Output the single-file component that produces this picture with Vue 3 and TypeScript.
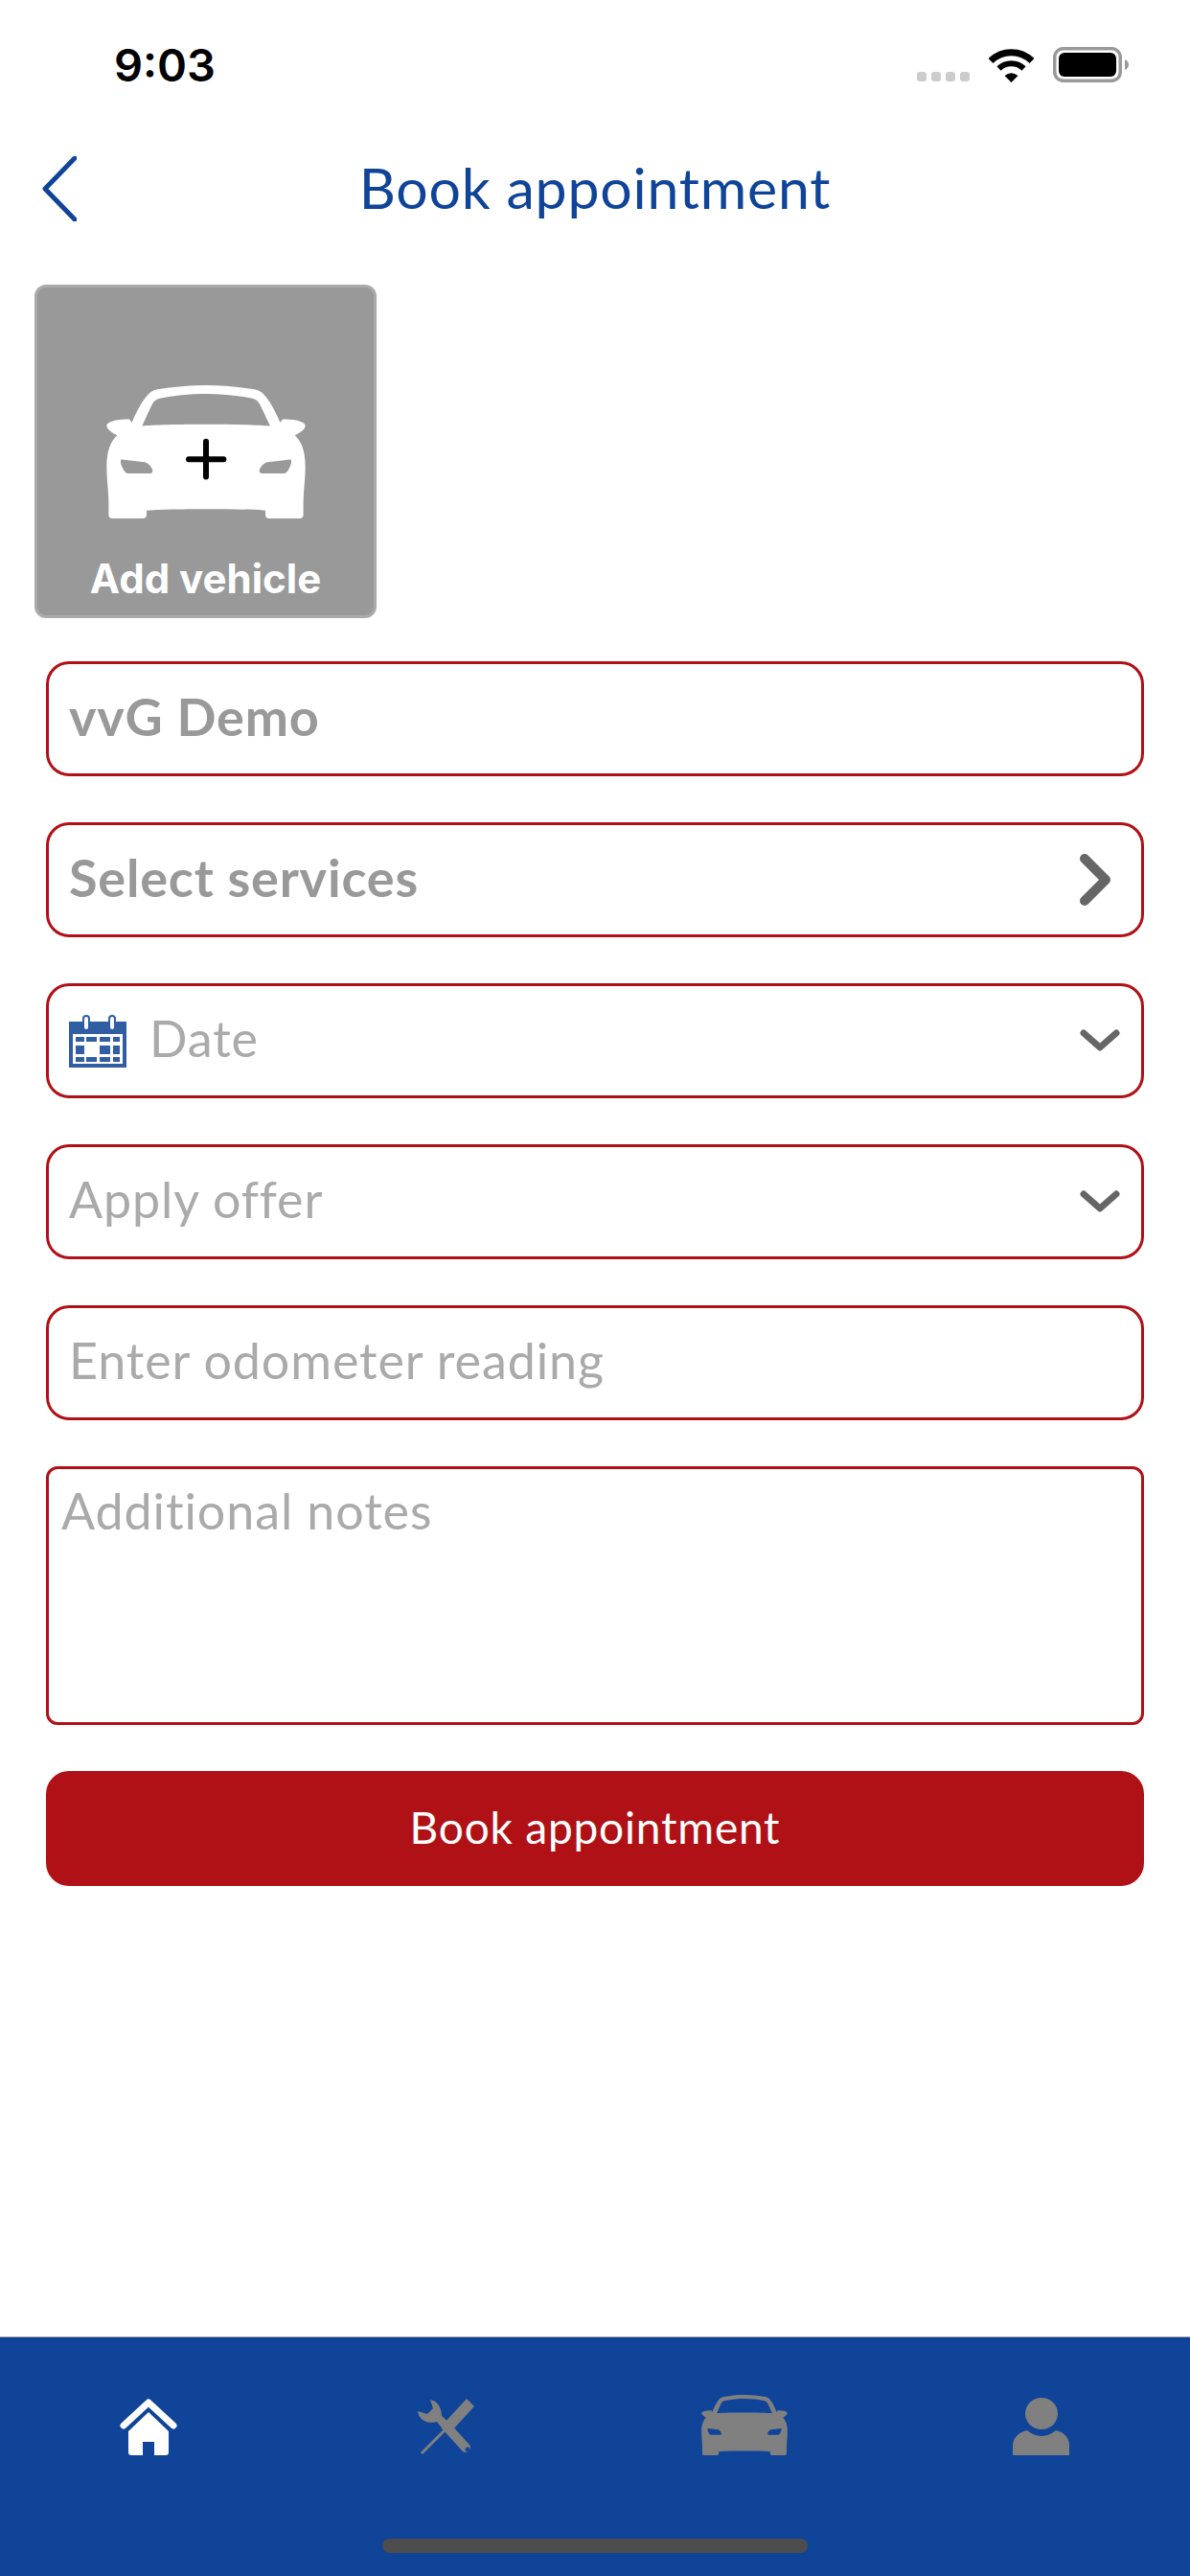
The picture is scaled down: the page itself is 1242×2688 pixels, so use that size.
<script setup lang="ts">
const carPath =
  'M350 482C365 445 385 410 400 395C408 385 418 381 430 378C480 370 530 365 582 365C634 365 684 370 734 378C746 381 756 385 764 395C779 410 799 445 814 482L822 472C850 472 885 475 893 490C893 505 875 515 860 522C880 540 893 570 893 620C893 670 885 700 887 770C887 778 882 783 875 783L780 783C772 783 768 778 768 770L768 758C710 752 454 752 396 758L396 770C396 778 392 783 384 783L289 783C282 783 277 778 277 770C279 700 271 670 271 620C271 570 284 540 304 522C289 515 271 505 271 490C279 475 314 472 342 472Z' +
  'M382 493C395 465 405 440 415 422C420 412 428 408 437 406C480 398 530 392 582 392C634 392 684 398 727 406C736 408 744 412 749 422C759 440 769 465 783 493C720 486 444 486 382 493Z' +
  'M318 598L390 606C402 608 412 622 415 632C416 640 410 642 405 642L340 642C330 642 322 630 316 612C314 604 314 598 318 598Z' +
  'M846 598L774 606C762 608 752 622 749 632C748 640 754 642 759 642L824 642C834 642 842 630 848 612C850 604 850 598 846 598Z'

const calendarCells = [
  [7, 23, 9, 5], [18, 23, 11, 5], [32, 23, 11, 5], [46, 23, 7, 5],
  [7, 32, 9, 9], [32, 32, 11, 9], [46, 32, 7, 9],
  [7, 44, 9, 5], [18, 44, 11, 5], [32, 44, 11, 5], [46, 44, 7, 5],
]
</script>

<template>
  <div class="page">
    <div class="status-bar">
      <span class="time">9:03</span>
      <div class="status-icons">
        <div class="signal">
          <i v-for="n in 4" :key="n"></i>
        </div>
        <svg class="wifi" width="47" height="36" viewBox="0 0 47 36">
          <path d="M2 13.5A30.5 30.5 0 0 1 45 13.5" fill="none" stroke="#000" stroke-width="7" />
          <path d="M10.5 21.5A18.5 18.5 0 0 1 36.5 21.5" fill="none" stroke="#000" stroke-width="6" />
          <path d="M23.5 36L16.5 29Q23.5 23.5 30.5 29Z" fill="#000" />
        </svg>
        <svg class="battery" width="79" height="37" viewBox="0 0 79 37">
          <rect x="1.75" y="1.75" width="68.5" height="33.5" rx="9" fill="#fff" stroke="#999" stroke-width="3.5" />
          <rect x="6" y="6" width="60" height="25" rx="6" fill="#000" />
          <path d="M75 13C77.5 14 79 16 79 18.500C79 21 77.500 23 75 24Z" fill="#999" />
        </svg>
      </div>
    </div>

    <header class="nav">
      <svg class="back" width="36" height="68" viewBox="0 0 36 68">
        <path d="M34 2L3 34L34 66" fill="none" stroke="#0f4499" stroke-width="5" stroke-linecap="round" stroke-linejoin="round" />
      </svg>
      <h1 class="title">Book appointment</h1>
    </header>

    <main class="content">
      <div class="add-vehicle">
        <svg class="add-car" width="208" height="139" viewBox="270 365 624 418" preserveAspectRatio="none">
          <path :d="carPath" fill="#fff" fill-rule="evenodd" />
          <path d="M528 597H637M582 542V652" stroke="#000" stroke-width="18" stroke-linecap="round" />
        </svg>
        <span class="add-label">Add vehicle</span>
      </div>

      <form class="form" @submit.prevent>
        <div class="field"><span class="value">vvG Demo</span></div>
        <div class="field">
          <span class="value">Select services</span>
          <svg class="chevron-right" width="32" height="54" viewBox="0 0 32 54">
            <path d="M5 5L27 27L5 49" fill="none" stroke="#666" stroke-width="10" stroke-linejoin="round" stroke-linecap="round" />
          </svg>
        </div>
        <div class="field">
          <svg class="calendar" width="60" height="55" viewBox="0 0 60 55">
            <rect y="7" width="60" height="48" fill="#315da3" />
            <rect x="4" y="20" width="52" height="31" fill="#fff" />
            <rect v-for="(c, i) in calendarCells" :key="i" :x="c[0]" :y="c[1]" :width="c[2]" :height="c[3]" fill="#315da3" />
            <rect x="15" y="1" width="6" height="15" rx="3" fill="#fff" stroke="#315da3" stroke-width="2" />
            <rect x="42" y="1" width="6" height="15" rx="3" fill="#fff" stroke="#315da3" stroke-width="2" />
          </svg>
          <span class="placeholder date">Date</span>
          <svg class="chevron-down" width="42" height="24" viewBox="0 0 42 24">
            <path d="M4 4L21 19L38 4" fill="none" stroke="#666" stroke-width="7" stroke-linecap="round" stroke-linejoin="round" />
          </svg>
        </div>
        <div class="field">
          <span class="placeholder">Apply offer</span>
          <svg class="chevron-down" width="42" height="24" viewBox="0 0 42 24">
            <path d="M4 4L21 19L38 4" fill="none" stroke="#666" stroke-width="7" stroke-linecap="round" stroke-linejoin="round" />
          </svg>
        </div>
        <div class="field"><span class="placeholder">Enter odometer reading</span></div>
        <div class="notes"><span class="placeholder">Additional notes</span></div>
        <button class="submit" type="submit">Book appointment</button>
      </form>
    </main>

    <footer class="tabbar">
      <nav class="tabs">
        <div class="tab">
          <svg width="60" height="60" viewBox="0 0 60 60">
            <path d="M4 29L30 5L56 29" fill="none" stroke="#fff" stroke-width="7" stroke-linecap="round" stroke-linejoin="round" />
            <path d="M30 15L51 35V57Q51 60 48 60H36V46H24V60H12Q9 60 9 57V35Z" fill="#fff" />
          </svg>
        </div>
        <div class="tab soft">
          <svg width="60" height="60" viewBox="0 0 60 60">
            <path d="M13 2C20 3 25 10 25 19L34 27L27 34L20 25C10 28 1 23 0 14L10 17L16 11Z" fill="#808080" />
            <path d="M30 30L50 52" stroke="#808080" stroke-width="10" stroke-linecap="round" />
            <circle cx="52" cy="54" r="2.500" fill="#0f4499" />
            <path d="M51 1L59 9L36 34L28 26Z" fill="#808080" />
            <path d="M29 33L4 58" stroke="#808080" stroke-width="3" />
          </svg>
        </div>
        <div class="tab soft">
          <svg class="tab-car" width="90" height="63" viewBox="270 365 624 418" preserveAspectRatio="none">
            <path :d="carPath" fill="#808080" fill-rule="evenodd" />
          </svg>
        </div>
        <div class="tab">
          <svg width="60" height="60" viewBox="0 0 60 60">
            <ellipse cx="30" cy="16.500" rx="17" ry="16.500" fill="#808080" />
            <path d="M0 60V50C0 42 6 36 15 34C20 38 25 40 30 40C35 40 40 38 45 34C54 36 59 42 59 50V60Z" fill="#808080" />
          </svg>
        </div>
      </nav>
      <div class="home-indicator"></div>
    </footer>
  </div>
</template>

<style>
html,
body {
  margin: 0;
  background: #fff;
}
</style>

<style scoped>
.page {
  width: 1242px;
  height: 2688px;
  display: flex;
  flex-direction: column;
  background: #fff;
  font-family: Lato, "Liberation Sans", sans-serif;
}
.status-bar {
  height: 130px;
  flex: none;
  box-sizing: border-box;
  padding: 44px 64px 0 119px;
  display: flex;
  justify-content: space-between;
  align-items: flex-start;
}
.time {
  font-family: Inter, "Liberation Sans", sans-serif;
  font-size: 47px;
  font-weight: 600;
  line-height: 47px;
  color: #000;
}
.status-icons {
  display: flex;
  align-items: flex-end;
  margin-top: 5px;
}
.signal {
  display: flex;
  gap: 5px;
  margin-right: 20px;
  margin-bottom: 1px;
}
.signal i {
  width: 10px;
  height: 10px;
  border-radius: 3px;
  background: #ccc;
}
.battery {
  margin-left: 20px;
}
.nav {
  height: 134px;
  flex: none;
  position: relative;
  display: flex;
  align-items: center;
  justify-content: center;
}
.back {
  position: absolute;
  left: 44px;
  top: 33px;
}
.title {
  margin: 0 0 3px;
  font-size: 59px;
  font-weight: 400;
  line-height: 1;
  letter-spacing: 0.8px;
  color: #0f4499;
}
.content {
  flex: 1;
  padding: 33px 48px 0 36px;
}
.add-vehicle {
  width: 357px;
  height: 348px;
  box-sizing: border-box;
  border: 3px solid #aaa;
  border-radius: 12px;
  background: #999;
  display: flex;
  flex-direction: column;
  align-items: center;
  padding-top: 102px;
}
.add-label {
  margin-top: 39px;
  font-family: Inter, "Liberation Sans", sans-serif;
  font-size: 42px;
  font-weight: 700;
  line-height: 48px;
  color: #fff;
}
.form {
  margin: 45px 0 0 12px;
  display: flex;
  flex-direction: column;
  gap: 48px;
}
.field {
  height: 120px;
  box-sizing: border-box;
  border: 3px solid #b01116;
  border-radius: 24px;
  padding: 0 22px 0 21px;
  display: flex;
  align-items: center;
  gap: 24px;
}
.value {
  margin-bottom: 6px;
  font-size: 54px;
  font-weight: 700;
  letter-spacing: 0.8px;
  color: #999;
}
.placeholder {
  margin-bottom: 6px;
  font-size: 52px;
  font-weight: 400;
  letter-spacing: 0.9px;
  color: #aaa;
}
.chevron-right {
  margin-left: auto;
  margin-right: 10px;
}
.chevron-down {
  margin-left: auto;
}
.notes {
  height: 270px;
  box-sizing: border-box;
  border: 3px solid #b01116;
  border-radius: 12px;
  padding: 12px 13px;
}
.submit {
  height: 120px;
  border: 0;
  border-radius: 24px;
  background: #b01116;
  color: #fff;
  font-family: inherit;
  font-size: 46px;
  letter-spacing: 0.8px;
  padding: 0 0 3px;
}
.tabbar {
  height: 250px;
  flex: none;
  box-sizing: border-box;
  border-top: 1px solid #aaa;
  background: #0f4499;
  display: flex;
  flex-direction: column;
  align-items: center;
}
.tabs {
  width: 100%;
  height: 123px;
  margin-top: 63px;
  display: grid;
  grid-template-columns: repeat(4, 1fr);
  align-self: stretch;
}
.tab {
  display: flex;
  justify-content: center;
  align-items: flex-start;
}
.tab.soft svg {
  filter: blur(0.7px);
}
.tab-car {
  margin: -3px 0 0 1px;
}
.home-indicator {
  width: 444px;
  height: 15px;
  margin-top: 24px;
  border-radius: 8px;
  background: #4d4d4d;
}
</style>
